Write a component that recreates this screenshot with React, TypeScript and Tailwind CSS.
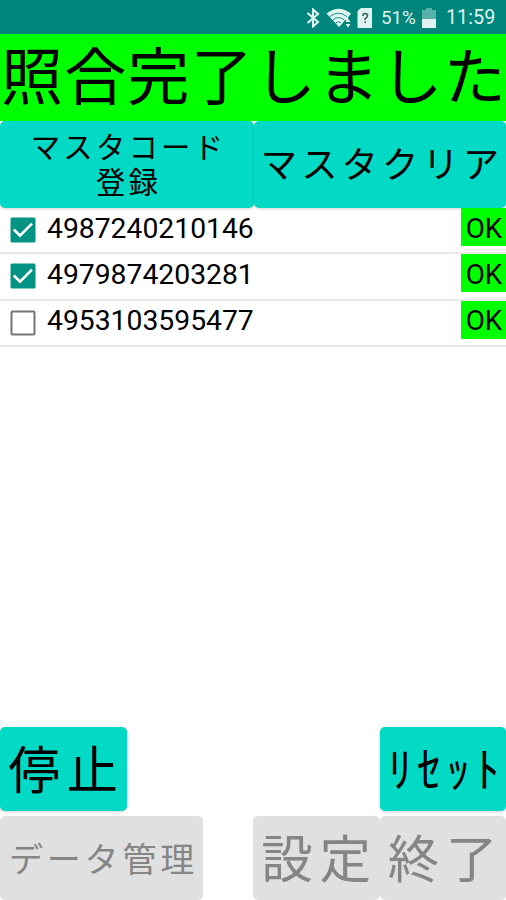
import clsx from "clsx";

const items = [
  { code: "4987240210146", checked: true, status: "OK" },
  { code: "4979874203281", checked: true, status: "OK" },
  { code: "4953103595477", checked: false, status: "OK" },
];

function StatusBar() {
  return (
    <div className="flex h-[34px] shrink-0 items-center bg-[#00857c] pt-[2px] text-[#dff3f1]">
      <svg className="ml-[306px] h-[20px] w-[14px]" viewBox="0 0 14 20" fill="none" stroke="currentColor" strokeWidth="2.100">
        <path d="M1.500 5 12 14 7 18.500V1.500L12 6 1.500 15" />
      </svg>
      <svg className="ml-[6px] h-5 w-[26px]" viewBox="0 0 26 20" fill="currentColor">
        <path d="M0.500 5.500Q12.500-4 25 5.500L22 9.500V13L19 12l-3 4-3 3Z" />
        <path d="M4 8.500Q12.500 2 21 8.500M7 11.700Q12.500 7.500 18 11.700M9.800 14.800Q12.500 12.800 15.200 14.800" fill="none" stroke="#00857c" strokeWidth="0.9" />
        <path d="m22 10.500 2.500 3.500h-5ZM22 19.500l-2.500-3.500h5Z" />
      </svg>
      <svg className="ml-[5px] h-5 w-4" viewBox="0 0 16 20" fill="none">
        <path d="M4 0H15v20H0.500V3Z" fill="currentColor" />
        <path d="M5.800 8Q5.800 5.500 8.200 5.500T10.600 7.700Q10.600 9 8.200 10.600V12M8.200 13.300v1.700" stroke="#35605d" strokeWidth="1.400" />
      </svg>
      <span className="ml-[8px] w-[38px] text-[18.800px] leading-none whitespace-nowrap">51%</span>
      <svg className="ml-[3px] h-5 w-[14px]" viewBox="0 0 14 20" fill="currentColor">
        <path d="M4 0h6v2h4v9H0V2h4Z" opacity="0.4" />
        <path d="M0 11h14v9H0Z" />
      </svg>
      <span className="ml-[10px] text-[19.800px] leading-none whitespace-nowrap">11:59</span>
    </div>
  );
}

function Button({
  className,
  disabled,
  children,
}: {
  className?: string;
  disabled?: boolean;
  children: React.ReactNode;
}) {
  return (
    <button
      disabled={disabled}
      className={clsx(
        "flex shrink-0 items-center justify-center rounded-[5px] text-center whitespace-nowrap",
        disabled
          ? "bg-[#e0e0e0] text-[#858585]"
          : "bg-[#03dac5] text-black shadow-[0_1px_3px_rgba(0,0,0,0.18)]",
        className
      )}
    >
      {children}
    </button>
  );
}

function CheckBox({ checked }: { checked: boolean }) {
  return (
    <svg className="ml-[10px] h-[26px] w-[26px] shrink-0" viewBox="0 0 26 26" fill="none">
      {checked ? (
        <>
          <rect x="0.500" y="0.500" width="25" height="25" rx="1.500" fill="#039384" />
          <path d="M3.800 12.500 10 18.700 22 6.700" stroke="white" strokeWidth="2.600" />
        </>
      ) : (
        <rect x="1.500" y="1.500" width="23" height="23" rx="1" stroke="#757575" strokeWidth="2" />
      )}
    </svg>
  );
}

export default function App() {
  return (
    <div className="flex h-[900px] w-[506px] flex-col overflow-hidden bg-white font-[Roboto,'Noto_Sans_CJK_JP',sans-serif] text-black">
      <StatusBar />

      <h1 className="flex h-[87px] shrink-0 items-center justify-center bg-[#00ff00] pt-[3px] pl-[2px] text-[62px] leading-none tracking-[1.250px] whitespace-nowrap">
        照合完了しました
      </h1>

      <div className="flex h-[87px] shrink-0">
        <Button className="w-[254px] pt-[3px] pl-[3px] text-[29.300px] leading-[35px] tracking-[3.300px]">
          <span>
            マスタコード
            <br />
            登録
          </span>
        </Button>
        <Button className="w-[252px] pt-[3px] pl-[4px] text-[36.300px] leading-none tracking-[4.100px]">
          マスタクリア
        </Button>
      </div>

      <ul>
        {items.map((item) => (
          <li
            key={item.code}
            className="flex h-[46.300px] items-start border-b-2 border-[#e9e9e9]"
          >
            <div className="flex h-full items-center">
              <CheckBox checked={item.checked} />
              <span className="ml-[11px] pb-[3px] text-[28.300px] leading-none">
                {item.code}
              </span>
            </div>
            <span className="ml-auto flex h-[38px] w-[45px] items-center justify-center bg-[#00ff00] pt-[3px] pl-px text-[27.800px] leading-none">
              {item.status}
            </span>
          </li>
        ))}
      </ul>

      <div className="mt-auto mb-[5px] flex h-[84px] shrink-0 justify-between">
        <Button className="w-[127px] pt-[5px] pl-[6px] text-[51.500px] leading-none tracking-[6.700px]">
          停止
        </Button>
        <Button className="w-[126px] pt-[5px] pl-[7px] text-[47.500px] leading-none tracking-[5.400px]">
          ﾘｾｯﾄ
        </Button>
      </div>

      <div className="flex h-[84px] shrink-0">
        <Button disabled className="w-[203px] pt-[4px] pl-[4px] text-[34px] leading-none tracking-[3.800px]">
          データ管理
        </Button>
        <Button disabled className="ml-auto w-[127px] pt-[5px] pl-[6px] text-[51.500px] leading-none tracking-[6.700px]">
          設定
        </Button>
        <Button disabled className="w-[126px] pt-[5px] pl-[6px] text-[51.500px] leading-none tracking-[6.700px]">
          終了
        </Button>
      </div>
    </div>
  );
}
